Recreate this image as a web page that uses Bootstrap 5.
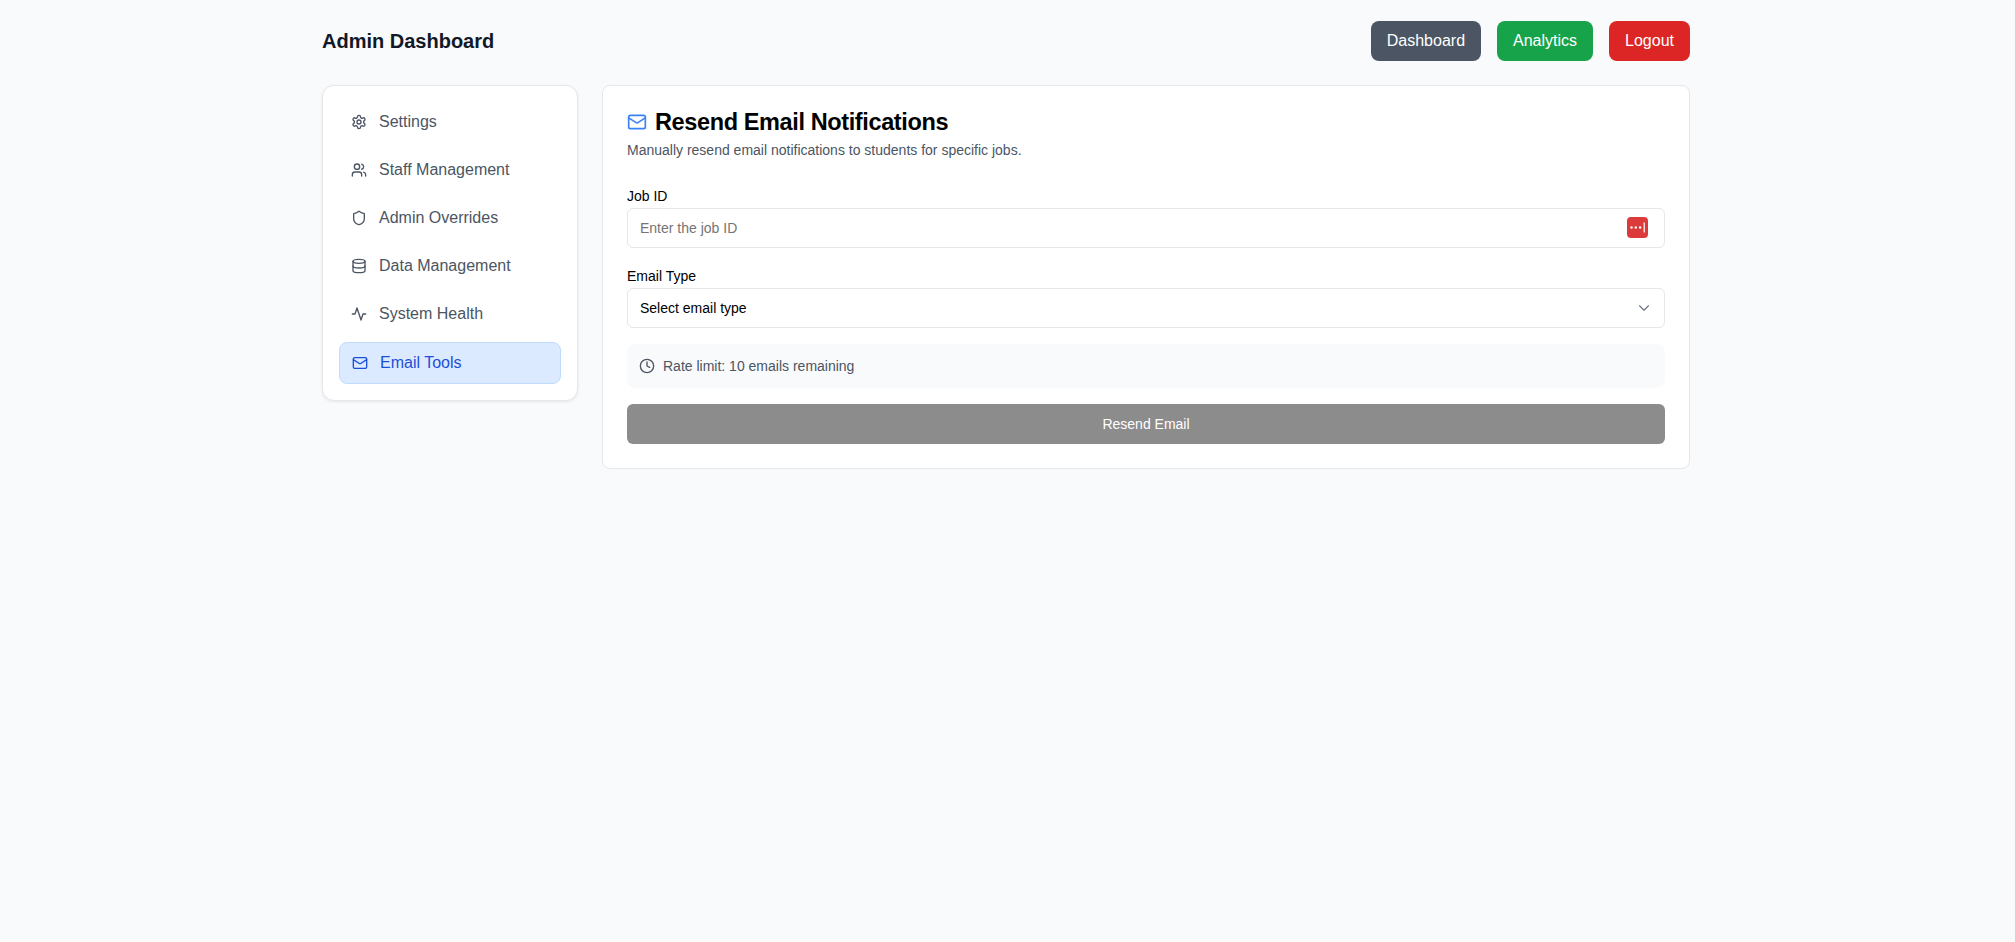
<!DOCTYPE html>
<html lang="en">
  <head>
    <meta charset="UTF-8" />
    <meta name="viewport" content="width=device-width, initial-scale=1.0" />
    <title>Admin Dashboard</title>
    <link
      href="https://cdn.jsdelivr.net/npm/bootstrap@5.3.2/dist/css/bootstrap.min.css"
      rel="stylesheet"
    />
    <style>
      body {
        background-color: #f9fafb;
        font-family: "Liberation Sans", Arial, sans-serif;
        min-height: 942px;
        padding-right: 3px;
      }
      .page-wrap {
        width: 1368px;
        margin: 0 auto;
        padding-top: 21px;
      }
      .top-bar {
        margin-bottom: 24px;
      }
      .top-title {
        font-size: 20px;
        line-height: 28px;
        font-weight: 700;
        color: #111827;
      }
      .top-btn {
        height: 40px;
        padding: 0 16px;
        font-size: 16px;
        line-height: 40px;
        border-radius: 8px;
        color: #fff;
        border: 0;
      }
      .top-btn:hover {
        color: #fff;
      }
      .btn-slate {
        background-color: #4b5563;
      }
      .btn-green {
        background-color: #16a34a;
      }
      .btn-red {
        background-color: #dc2626;
      }
      .side-card {
        width: 256px;
        padding: 16px;
        background: #fff;
        border: 1px solid #e5e7eb;
        border-radius: 12px;
        box-shadow: 0 1px 3px rgba(0, 0, 0, 0.08);
        flex-shrink: 0;
      }
      .side-link {
        height: 40px;
        padding: 0 12px;
        gap: 12px;
        font-size: 16px;
        color: #4b5563;
        border-radius: 8px;
        text-decoration: none;
      }
      .side-link.active-link {
        height: 42px;
        background-color: #dbeafe;
        border: 1px solid #bfdbfe;
        color: #1d4ed8;
      }
      .side-link svg,
      .rate-box svg,
      .head-icon {
        flex-shrink: 0;
      }
      .main-card {
        padding: 24px;
        background: #fff;
        border: 1px solid #e5e7eb;
        border-radius: 8px;
      }
      .main-title {
        font-size: 23.5px;
        letter-spacing: -0.38px;
        line-height: 24px;
        font-weight: 700;
        color: #000;
        margin: 0;
      }
      .main-sub {
        font-size: 14px;
        line-height: 20px;
        color: #4b5563;
        margin: 6px 0 26px;
      }
      .job-field {
        margin-bottom: 18px;
      }
      .field-label {
        display: block;
        font-size: 14px;
        line-height: 20px;
        color: #000;
        margin-bottom: 2px;
      }
      .field-input {
        height: 40px;
        padding: 0 12px;
        font-size: 14px;
        color: #000;
        border: 1px solid #e5e7eb;
        border-radius: 6px;
      }
      .field-input::placeholder {
        color: #757575;
        opacity: 1;
      }
      .field-select {
        --bs-form-select-bg-img: url("data:image/svg+xml,%3csvg xmlns='http://www.w3.org/2000/svg' viewBox='0 0 24 24'%3e%3cpath fill='none' stroke='%236b7280' stroke-width='1.5' stroke-linecap='round' stroke-linejoin='round' d='m6 9 6 6 6-6'/%3e%3c/svg%3e");
        background-position: right 11px center;
        background-size: 18px 18px;
      }
      .pass-badge {
        position: absolute;
        top: 9px;
        right: 17px;
        width: 21px;
        height: 21px;
        border-radius: 4px;
        background-color: #dc3b3b;
      }
      .rate-box {
        height: 44px;
        padding: 0 12px;
        gap: 8px;
        font-size: 14px;
        color: #4b5563;
        background-color: #f9fafb;
        border-radius: 8px;
        margin: 16px 0;
      }
      .send-btn,
      .send-btn:disabled {
        height: 40px;
        font-size: 14px;
        color: #fff;
        background-color: #8c8c8c;
        border: 0;
        border-radius: 6px;
        opacity: 1;
      }
    </style>
  </head>
  <body>
    <div class="page-wrap">
      <header class="top-bar d-flex justify-content-between align-items-center">
        <div class="top-title">Admin Dashboard</div>
        <div class="d-flex gap-3">
          <a class="btn top-btn btn-slate" href="#">Dashboard</a>
          <a class="btn top-btn btn-green" href="#">Analytics</a>
          <a class="btn top-btn btn-red" href="#">Logout</a>
        </div>
      </header>

      <div class="d-flex align-items-start gap-4">
        <!-- Sidebar -->
        <nav class="side-card nav flex-column gap-2">
          <a class="side-link d-flex align-items-center" href="#">
            <svg width="16" height="16" viewBox="0 0 24 24" fill="none" stroke="currentColor" stroke-width="2" stroke-linecap="round" stroke-linejoin="round"><path d="M12.22 2h-.44a2 2 0 0 0-2 2v.18a2 2 0 0 1-1 1.73l-.43.25a2 2 0 0 1-2 0l-.15-.08a2 2 0 0 0-2.73.73l-.22.38a2 2 0 0 0 .73 2.73l.15.1a2 2 0 0 1 1 1.72v.51a2 2 0 0 1-1 1.74l-.15.09a2 2 0 0 0-.73 2.73l.22.38a2 2 0 0 0 2.73.73l.15-.08a2 2 0 0 1 2 0l.43.25a2 2 0 0 1 1 1.73V20a2 2 0 0 0 2 2h.44a2 2 0 0 0 2-2v-.18a2 2 0 0 1 1-1.73l.43-.25a2 2 0 0 1 2 0l.15.08a2 2 0 0 0 2.73-.73l.22-.39a2 2 0 0 0-.73-2.73l-.15-.08a2 2 0 0 1-1-1.74v-.5a2 2 0 0 1 1-1.74l.15-.09a2 2 0 0 0 .73-2.73l-.22-.38a2 2 0 0 0-2.73-.73l-.15.08a2 2 0 0 1-2 0l-.43-.25a2 2 0 0 1-1-1.73V4a2 2 0 0 0-2-2z"/><circle cx="12" cy="12" r="3"/></svg>
            Settings
          </a>
          <a class="side-link d-flex align-items-center" href="#">
            <svg width="16" height="16" viewBox="0 0 24 24" fill="none" stroke="currentColor" stroke-width="2" stroke-linecap="round" stroke-linejoin="round"><path d="M16 21v-2a4 4 0 0 0-4-4H6a4 4 0 0 0-4 4v2"/><circle cx="9" cy="7" r="4"/><path d="M22 21v-2a4 4 0 0 0-3-3.87"/><path d="M16 3.13a4 4 0 0 1 0 7.75"/></svg>
            Staff Management
          </a>
          <a class="side-link d-flex align-items-center" href="#">
            <svg width="16" height="16" viewBox="0 0 24 24" fill="none" stroke="currentColor" stroke-width="2" stroke-linecap="round" stroke-linejoin="round"><path d="M20 13c0 5-3.5 7.5-7.66 8.95a1 1 0 0 1-.67-.01C7.5 20.5 4 18 4 13V6a1 1 0 0 1 1-1c2 0 4.5-1.2 6.24-2.72a1.17 1.17 0 0 1 1.52 0C14.51 3.81 17 5 19 5a1 1 0 0 1 1 1z"/></svg>
            Admin Overrides
          </a>
          <a class="side-link d-flex align-items-center" href="#">
            <svg width="16" height="16" viewBox="0 0 24 24" fill="none" stroke="currentColor" stroke-width="2" stroke-linecap="round" stroke-linejoin="round"><ellipse cx="12" cy="5" rx="9" ry="3"/><path d="M3 5v14a9 3 0 0 0 18 0V5"/><path d="M3 12a9 3 0 0 0 18 0"/></svg>
            Data Management
          </a>
          <a class="side-link d-flex align-items-center" href="#">
            <svg width="16" height="16" viewBox="0 0 24 24" fill="none" stroke="currentColor" stroke-width="2" stroke-linecap="round" stroke-linejoin="round"><path d="M22 12h-4l-3 9L9 3l-3 9H2"/></svg>
            System Health
          </a>
          <a class="side-link active-link d-flex align-items-center" href="#">
            <svg width="16" height="16" viewBox="0 0 24 24" fill="none" stroke="currentColor" stroke-width="2" stroke-linecap="round" stroke-linejoin="round"><rect width="20" height="16" x="2" y="4" rx="2"/><path d="m22 7-8.97 5.7a1.94 1.94 0 0 1-2.06 0L2 7"/></svg>
            Email Tools
          </a>
        </nav>

        <!-- Main panel -->
        <main class="main-card flex-grow-1">
          <div class="d-flex align-items-center gap-2">
            <svg class="head-icon" width="20" height="20" viewBox="0 0 24 24" fill="none" stroke="#3b82f6" stroke-width="2" stroke-linecap="round" stroke-linejoin="round"><rect width="20" height="16" x="2" y="4" rx="2"/><path d="m22 7-8.97 5.7a1.94 1.94 0 0 1-2.06 0L2 7"/></svg>
            <h1 class="main-title">Resend Email Notifications</h1>
          </div>
          <p class="main-sub">Manually resend email notifications to students for specific jobs.</p>

          <form>
            <div class="job-field">
              <label class="field-label" for="jobId">Job ID</label>
              <div class="position-relative">
                <input type="text" class="form-control field-input" id="jobId" placeholder="Enter the job ID" />
                <span class="pass-badge d-flex align-items-center justify-content-center">
                  <svg width="17" height="11" viewBox="0 0 17 11"><circle cx="2.5" cy="5.5" r="1.2" fill="#fff"/><circle cx="6.8" cy="5.5" r="1.2" fill="#fff"/><circle cx="11.1" cy="5.5" r="1.2" fill="#fff"/><rect x="14.6" y="0.5" width="1.2" height="10" fill="#fff"/></svg>
                </span>
              </div>
            </div>

            <div>
              <label class="field-label" for="emailType">Email Type</label>
              <select class="form-select field-input field-select" id="emailType">
                <option>Select email type</option>
              </select>
            </div>

            <div class="rate-box d-flex align-items-center">
              <svg width="16" height="16" viewBox="0 0 24 24" fill="none" stroke="currentColor" stroke-width="2" stroke-linecap="round" stroke-linejoin="round"><circle cx="12" cy="12" r="10"/><polyline points="12 6 12 12 16 14"/></svg>
              Rate limit: 10 emails remaining
            </div>

            <button type="button" class="btn send-btn w-100" disabled>Resend Email</button>
          </form>
        </main>
      </div>
    </div>
    <script src="https://cdn.jsdelivr.net/npm/bootstrap@5.3.2/dist/js/bootstrap.bundle.min.js"></script>
  </body>
</html>
